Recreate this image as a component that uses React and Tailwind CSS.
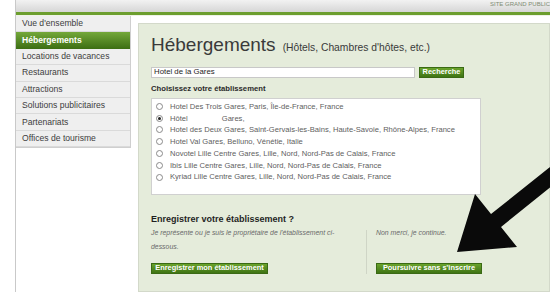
const menu = [
  "Vue d'ensemble",
  "Hébergements",
  "Locations de vacances",
  "Restaurants",
  "Attractions",
  "Solutions publicitaires",
  "Partenariats",
  "Offices de tourisme",
];

const results = [
  { label: "Hotel Des Trois Gares, Paris, Île-de-France, France" },
  { label: "Hôtel", extra: "Gares,", checked: true },
  { label: "Hotel des Deux Gares, Saint-Gervais-les-Bains, Haute-Savoie, Rhône-Alpes, France" },
  { label: "Hotel Val Gares, Belluno, Vénétie, Italie" },
  { label: "Novotel Lille Centre Gares, Lille, Nord, Nord-Pas de Calais, France" },
  { label: "Ibis Lille Centre Gares, Lille, Nord, Nord-Pas de Calais, France" },
  { label: "Kyriad Lille Centre Gares, Lille, Nord, Nord-Pas de Calais, France" },
];

function GreenButton({ children, className = "" }) {
  return (
    <button
      className={
        "h-[11px] px-[4px] flex items-center justify-center bg-gradient-to-b from-[#6aa32c] to-[#3f7414] border border-[#3a6a14] text-white font-bold text-[7.4px] leading-none whitespace-nowrap " +
        className
      }
    >
      {children}
    </button>
  );
}

function Radio({ checked }) {
  return (
    <span className="w-[7px] h-[7px] rounded-full border border-[#8a8a8a] bg-white flex items-center justify-center shrink-0">
      {checked && <span className="w-[3px] h-[3px] rounded-full bg-[#222]" />}
    </span>
  );
}

export default function App() {
  return (
    <div
      className="w-[550px] h-[292px] overflow-hidden relative bg-white"
      style={{ fontFamily: '"Liberation Sans", Arial, sans-serif' }}
    >
      <div className="ml-[15px] h-full border-l border-[#c9c9c9] flex flex-col">
        {/* top bar */}
        <div className="h-[12px] bg-gradient-to-b from-[#f2f2f2] to-[#d6d6d6] flex justify-end items-start">
          <span className="text-[6px] leading-[6px] pt-[1px] text-[#7f8c74] whitespace-nowrap">
            SITE GRAND PUBLIC
          </span>
        </div>
        <div className="h-[3px] bg-[#6c9e2e]" />
        <div className="h-px bg-[#eef3e6]" />

        <div className="flex flex-1">
          {/* sidebar */}
          <div className="w-[115px] shrink-0 self-start border-r border-b border-[#cfcfcf] bg-[#efefef]">
            {menu.map((item, i) => (
              <div
                key={item}
                className={
                  i === 1
                    ? "h-[16.4px] pl-[6px] flex items-center text-[8.6px] font-bold text-white bg-gradient-to-b from-[#74a83a] to-[#3c6e12]"
                    : "h-[16.4px] pl-[6px] flex items-center text-[8.6px] text-[#3d3d3d] border-b border-[#dadada]"
                }
              >
                {item}
              </div>
            ))}
          </div>

          {/* main panel */}
          <div className="ml-[7px] mt-[7px] flex-1 bg-[#e5ecdb] border border-[#d3d9ca] pl-[12px] pt-[11px]">
            <div className="flex items-baseline text-[#3a3a3a] leading-[20px]">
              <span className="text-[19px]">Hébergements</span>
              <span className="text-[10.3px] ml-[7px]">(Hôtels, Chambres d'hôtes, etc.)</span>
            </div>

            <div className="flex items-start mt-[8.5px]">
              <div className="w-[264px] h-[11px] bg-white border border-[#c8c8c8] flex items-center pl-[2px] text-[7.8px] font-medium text-[#1e1e1e]">
                Hotel de la Gares
              </div>
              <GreenButton className="ml-[4px] h-[10px] w-[45px]">Recherche</GreenButton>
            </div>

            <div className="mt-[6.5px] text-[7.7px] leading-[10px] font-bold text-[#2a2a2a]">
              Choisissez votre établissement
            </div>

            <div className="mt-[3.5px] w-[330px] h-[97.5px] bg-white border border-[#d0d0d0] pt-[2px] pl-[4px]">
              {results.map((r) => (
                <div key={r.label + (r.extra || "")} className="h-[11.8px] flex items-center text-[7.6px] text-[#5e5e5e] whitespace-nowrap">
                  <Radio checked={r.checked} />
                  <span className="ml-[7px]">{r.label}</span>
                  {r.extra && <span className="ml-[34px]">{r.extra}</span>}
                </div>
              ))}
            </div>

            <div className="mt-[19.5px] text-[9px] leading-[9px] font-bold text-[#1f1f1f]">
              Enregistrer votre établissement ?
            </div>
            <div className="flex mt-[2px]">
              <div className="w-[215px] flex flex-col">
                <p className="italic text-[6.9px] leading-[14px] text-[#6a6a6a] pr-[8px]">
                  Je représente ou je suis le propriétaire de l'établissement ci-dessous.
                </p>
                <GreenButton className="mt-[9px] w-[117px]">Enregistrer mon établissement</GreenButton>
              </div>
              <div className="w-px bg-[#cfd5c6] mt-[4px]" />
              <div className="pl-[9px] flex flex-col">
                <p className="italic text-[6.9px] leading-[14px] text-[#6a6a6a]">Non merci, je continue.</p>
                <GreenButton className="mt-auto w-[106px]">Poursuivre sans s'inscrire</GreenButton>
              </div>
            </div>
          </div>
        </div>
      </div>

      {/* arrow overlay */}
      <svg
        className="absolute left-[440px] top-[150px] w-[110px] h-[120px]"
        viewBox="440 150 110 120"
      >
        <polygon
          points="457,252 517,247 501,227 579,164 569,152 491,214 475,194"
          fill="#0a0a0a"
        />
      </svg>
    </div>
  );
}
